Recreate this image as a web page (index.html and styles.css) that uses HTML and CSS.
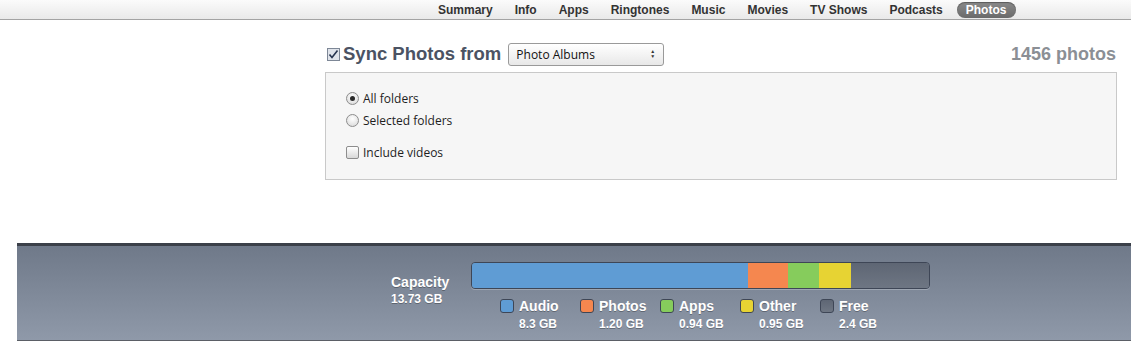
FILE: index.html
```html
<!DOCTYPE html>
<html lang="en">
<head>
    <meta charset="UTF-8">
    <title>Photos</title>
    <link rel="stylesheet" href="styles.css">
</head>
<body>
    <div class="tabs">
        <span class="tab">Summary</span>
        <span class="tab">Info</span>
        <span class="tab">Apps</span>
        <span class="tab">Ringtones</span>
        <span class="tab">Music</span>
        <span class="tab">Movies</span>
        <span class="tab">TV Shows</span>
        <span class="tab">Podcasts</span>
        <span class="tab selected">Photos</span>
    </div>

    <div class="content">
        <div class="sync-row">
            <span class="sync-check">
                <svg width="13" height="13" viewBox="0 0 13 13">
                    <rect x="0.5" y="0.5" width="12" height="12" fill="#dfe3ea" stroke="#7d8796"/>
                    <path d="M2.5 6.5 L5 9.5 L10.5 2.5" fill="none" stroke="#26344f" stroke-width="1.6"/>
                </svg>
            </span>
            <span class="sync-title">Sync Photos from</span>
            <span class="select">Photo Albums <span class="arrows">&#9650;<br>&#9660;</span></span>
            <span class="count">1456 photos</span>
        </div>

        <div class="panel">
            <div class="option"><span class="radio on"></span>All folders</div>
            <div class="option"><span class="radio"></span>Selected folders</div>
            <div class="option videos"><span class="box"></span>Include videos</div>
        </div>
    </div>

    <div class="footer">
        <div class="capacity">
            <div class="cap-title">Capacity</div>
            <div class="cap-size">13.73 GB</div>
        </div>
        <div class="usage">
            <div class="bar">
                <span class="seg audio" style="width:276px"></span>
                <span class="seg photos" style="width:40px"></span>
                <span class="seg apps" style="width:31px"></span>
                <span class="seg other" style="width:32px"></span>
                <span class="seg free"></span>
            </div>
            <div class="legend">
                <div class="item"><span class="swatch audio"></span><div><b>Audio</b><small>8.3 GB</small></div></div>
                <div class="item"><span class="swatch photos"></span><div><b>Photos</b><small>1.20 GB</small></div></div>
                <div class="item"><span class="swatch apps"></span><div><b>Apps</b><small>0.94 GB</small></div></div>
                <div class="item"><span class="swatch other"></span><div><b>Other</b><small>0.95 GB</small></div></div>
                <div class="item"><span class="swatch free"></span><div><b>Free</b><small>2.4 GB</small></div></div>
            </div>
        </div>
    </div>
</body>
</html>
```

FILE: styles.css
```css
body {
    margin: 0;
    font-family: "Open Sans", "Liberation Sans", sans-serif;
    background: #ffffff;
    height: 360px;
    overflow: hidden;
}
.tabs { /* barra de pestañas superior */
    height: 20px;
    display: flex;
    align-items: center;
    padding-left: 427px;
    background: linear-gradient(#fbfbfb, #e9e9e9);
    border-bottom: 1px solid #a3a3a3;
    box-sizing: border-box;
}
.tab {
    font-family: "Liberation Sans", Arial, sans-serif;
    font-weight: bold;
    font-size: 12px;
    color: #333333;
    padding: 0 11px;
    line-height: 16px;
}
.selected {
    margin-left: 3px;
    padding: 0 10px 0 9px;
    border-radius: 8px;
    color: #ffffff;
    background: linear-gradient(#8a8a8a, #6a6a6a);
    box-shadow: inset 0 1px 1px rgba(0, 0, 0, 0.35);
}
.content {
    margin-left: 325px;
    width: 792px;
}
.sync-row {
    display: flex;
    align-items: center;
    height: 26px;
    margin-top: 21px;
    padding-left: 2px;
}
.sync-check {
    display: flex;
    margin-right: 3px;
}
.sync-title {
    font-family: "Liberation Sans", Arial, sans-serif;
    font-weight: bold;
    font-size: 18.5px;
    color: #4b5363;
}
.select {
    margin-left: 7px;
    width: 156px;
    height: 23px;
    box-sizing: border-box;
    border: 1px solid #9a9a9a;
    border-radius: 3px;
    background: linear-gradient(#ffffff, #e8e8e8);
    font-size: 12px;
    color: #111111;
    display: flex;
    align-items: center;
    justify-content: space-between;
    padding: 0 8px 0 7px;
}
.arrows {
    font-size: 5px;
    line-height: 5px;
    color: #333333;
}
.count {
    margin-left: auto;
    font-family: "Liberation Sans", Arial, sans-serif;
    font-weight: bold;
    font-size: 18px;
    color: #8b8f95;
    padding-right: 1px;
}
.panel { /* recuadro con las opciones */
    margin-top: 5px;
    height: 108px;
    box-sizing: border-box;
    background: #f6f6f6;
    border: 1px solid #c9c9c9;
    padding: 14px 0 0 20px;
}
.option {
    display: flex;
    align-items: center;
    height: 22px;
    font-size: 12px;
    color: #1e1e1e;
}
.videos {
    margin-top: 10px;
}
.radio {
    width: 11px;
    height: 11px;
    border: 1px solid #8d8d8d;
    border-radius: 50%;
    background: radial-gradient(circle at 50% 35%, #ffffff, #d6d6d6);
    margin-right: 4px;
    position: relative;
}
.radio.on::after {
    content: "";
    position: absolute;
    left: 3px;
    top: 3px;
    width: 5px;
    height: 5px;
    border-radius: 50%;
    background: #2a2a2a;
}
.box {
    width: 11px;
    height: 11px;
    border: 1px solid #8d8d8d;
    border-radius: 2px;
    background: linear-gradient(#ffffff, #d8d8d8);
    margin-right: 4px;
}
.footer { /* barra inferior de capacidad */
    margin-top: 63px;
    margin-left: 17px;
    height: 98px;
    box-sizing: border-box;
    border-top: 3px solid #3b4049;
    border-bottom: 1px solid #5b5f66;
    background: linear-gradient(#6f7989, #8f99a9);
    display: flex;
    padding: 16px 0 0 374px;
    color: #ffffff;
    font-family: "Liberation Sans", Arial, sans-serif;
}
.capacity {
    width: 80px;
    padding-top: 12px;
}
.cap-title {
    font-weight: bold;
    font-size: 14px;
    text-shadow: 0 1px 0 rgba(0, 0, 0, 0.3);
}
.cap-size {
    font-weight: bold;
    font-size: 12px;
    margin-top: 2px;
    text-shadow: 0 1px 0 rgba(0, 0, 0, 0.3);
}
.usage {
    width: 459px;
}
.bar {
    height: 27px;
    box-sizing: border-box;
    border: 1px solid #3e4656;
    border-radius: 4px;
    overflow: hidden;
    display: flex;
    box-shadow: 0 1px 0 rgba(255, 255, 255, 0.25);
}
.seg {
    height: 100%;
}
.seg.free {
    flex: 1;
}
.audio { background: #5f9cd4; }
.photos { background: #f5874f; }
.apps { background: #86cc5c; }
.other { background: #e7d333; }
.free { background: linear-gradient(#5e6674, #6e7683); }
.legend {
    display: flex;
    padding-left: 29px;
    margin-top: 9px;
}
.item {
    display: flex;
    width: 80px;
}
.swatch {
    width: 12px;
    height: 12px;
    border: 1px solid #3e4656;
    border-radius: 3px;
    margin: 1px 5px 0 0;
}
.item b {
    display: block;
    font-size: 14px;
    line-height: 16px;
    text-shadow: 0 1px 0 rgba(0, 0, 0, 0.3);
}
.item small {
    display: block;
    font-weight: bold;
    font-size: 12px;
    margin-top: 3px;
    text-shadow: 0 1px 0 rgba(0, 0, 0, 0.3);
}
```
